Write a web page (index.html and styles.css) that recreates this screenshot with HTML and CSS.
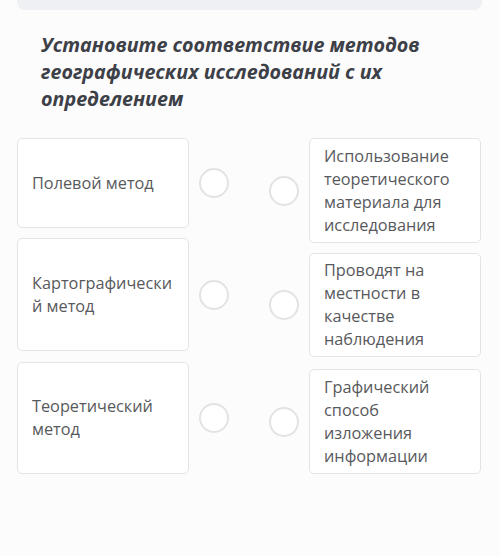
FILE: index.html
```html
<!DOCTYPE html>
<html lang="ru">
<head>
    <meta charset="UTF-8">
    <meta name="viewport" content="width=device-width, initial-scale=1.0">
    <title>Установите соответствие</title>
    <link rel="stylesheet" href="styles.css">
</head>
<body>
<div class="top-bar"></div>
<h2 class="question">Установите соответствие методов географических исследований с их определением</h2>
<div class="match">
    <div class="column">
        <div class="item">
            <div class="card h90">Полевой метод</div>
            <span class="dot"></span>
        </div>
        <div class="item">
            <div class="card h113">Картографический метод</div>
            <span class="dot"></span>
        </div>
        <div class="item gap-11">
            <div class="card h112">Теоретический метод</div>
            <span class="dot"></span>
        </div>
    </div>
    <div class="column">
        <div class="item">
            <span class="dot"></span>
            <div class="card h105">Использование теоретического материала для исследования</div>
        </div>
        <div class="item">
            <span class="dot"></span>
            <div class="card h104">Проводят на местности в качестве наблюдения</div>
        </div>
        <div class="item gap-12">
            <span class="dot"></span>
            <div class="card h105">Графический способ изложения информации</div>
        </div>
    </div>
</div>
</body>
</html>
```

FILE: styles.css
```css
body {
    font-family: 'Open Sans', 'Noto Sans', sans-serif;
    margin: 0;
    padding: 0;
    min-height: 100vh;
    background: #fcfcfd;
}

.top-bar {
    height: 10px;
    margin: 0 18px 0 17px;
    background: #eff0f3;
    border-radius: 0 0 8px 8px;
}

.question {
    margin: 21px 40px 0 41px;
    font-size: 19.7px;
    line-height: 27px;
    font-weight: 700;
    font-style: italic;
    color: #3d4047;
}

.match {
    display: flex;
    gap: 40px;
    margin: 26px 0 0 17px;
}

.column {
    display: flex;
    flex-direction: column;
    gap: 10px;
    width: 212px;
}

.item {
    display: flex;
    align-items: center;
    gap: 10px;
}

.gap-11 {
    margin-top: 1px;
}

.gap-12 {
    margin-top: 2px;
}

.card {
    box-sizing: border-box;
    width: 172px;
    flex: none;
    display: flex;
    align-items: center;
    padding: 0 12px 0 14px;
    background: #fff;
    border: 1.5px solid #e4e4e6;
    border-radius: 5px;
    font-size: 16.3px;
    line-height: 23px;
    color: #58595c;
    overflow-wrap: anywhere;
}

.h90 { height: 90px; }
.h104 { height: 104px; }
.h105 { height: 105px; }
.h112 { height: 112px; }
.h113 { height: 113px; }

.dot {
    box-sizing: border-box;
    width: 30px;
    height: 30px;
    flex: none;
    border: 2px solid #e3e3e3;
    border-radius: 50%;
    background: #fff;
}
```
